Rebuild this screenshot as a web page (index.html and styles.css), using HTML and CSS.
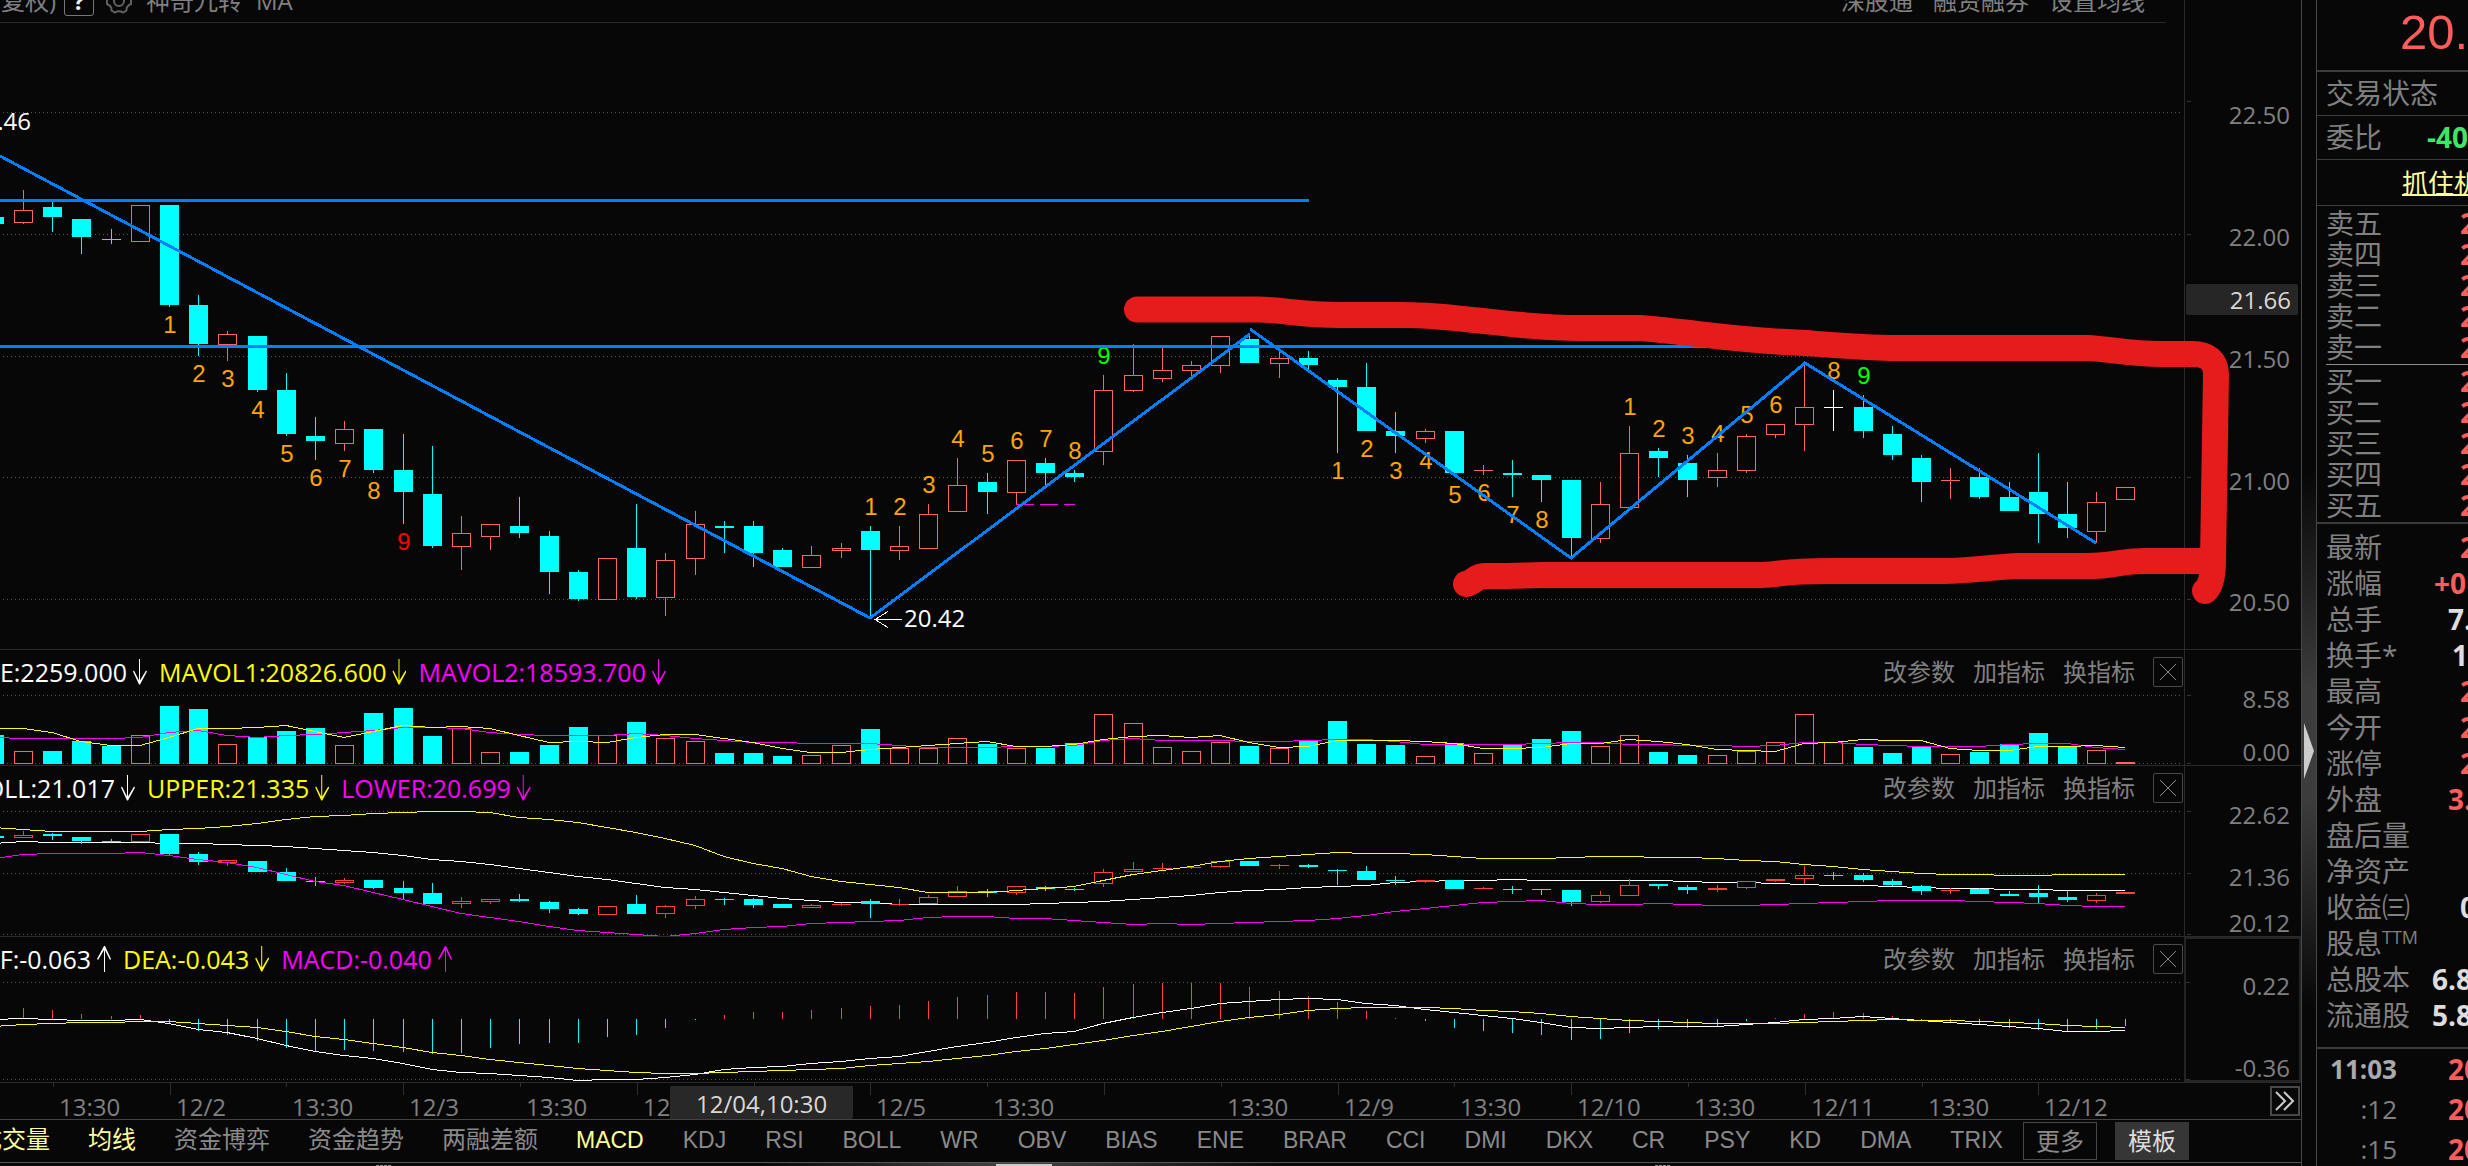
FILE: index.html
```
<!DOCTYPE html>
<html lang="zh-CN">
<head>
<meta charset="utf-8">
<title>K线图</title>
<link rel="stylesheet" href="styles.css">
</head>
<body>
<div class="terminal">
  <main class="charts">
    <section class="panel">
      <div class="plot">
        <div class="toolbar">
          <div class="toolbar-left">
            <span class="adjust">(前复权)</span>
            <button class="help" type="button">?</button>
            <button class="gear" type="button" aria-label="设置">
              <svg width="30" height="30" viewBox="0 0 30 30"><path d="M11 3.500Q15 6 19 3.500L22.500 5.500Q22 10 27 12V18Q22 20 22.500 24.500L19 26.500Q15 24 11 26.500L7.500 24.500Q8 20 3 18V12Q8 10 7.500 5.500Z"/><circle cx="15" cy="15" r="5"/></svg>
            </button>
            <span>神奇九转</span>
            <span>MA</span>
          </div>
          <div class="toolbar-right">
            <a href="#">深股通</a><a href="#">融资融券</a><a href="#">设置均线</a>
          </div>
        </div>
        <svg class="chart chart-price" id="price" viewBox="0 23 2184 626" preserveAspectRatio="xMaxYMin slice"></svg>
      </div>
      <svg class="axis" width="117" height="649">
        <g class="ticks"><path d="M2 101.500h4M2 234.500h4M2 356.500h4M2 477.500h4M2 599.500h4"/></g>
        <g class="tag"><rect x="1" y="284" width="112" height="31" rx="2"/></g>
        <g class="labels">
          <text x="105" y="124">22.50</text><text x="105" y="246">22.00</text>
          <text class="current" x="106" y="309">21.66</text>
          <text x="105" y="368">21.50</text><text x="105" y="490">21.00</text><text x="105" y="611">20.50</text>
        </g>
      </svg>
    </section>

    <section class="panel panel-split">
      <div class="plot">
        <header class="legend">
          <div class="readings">
            <span class="lead lead-volume white">VOLUME:2259.000<i class="arrow down"></i></span>
            <span class="yellow">MAVOL1:20826.600<i class="arrow down"></i></span>
            <span class="magenta">MAVOL2:18593.700<i class="arrow down"></i></span>
          </div>
          <div class="actions"><button type="button">改参数</button><button type="button">加指标</button><button type="button">换指标</button><button class="close" type="button" aria-label="关闭"></button></div>
        </header>
        <svg class="chart chart-volume" id="volume" viewBox="0 694 2184 71" preserveAspectRatio="xMaxYMin slice"></svg>
      </div>
      <svg class="axis" width="117" height="115">
        <g class="ticks"><path d="M2 45.500h4M2 113.500h4"/></g>
        <g class="labels"><text x="105" y="58">8.58</text><text x="105" y="111">0.00</text></g>
      </svg>
    </section>

    <section class="panel panel-split">
      <div class="plot">
        <header class="legend">
          <div class="readings">
            <span class="lead lead-boll white">BOLL:21.017<i class="arrow down"></i></span>
            <span class="yellow">UPPER:21.335<i class="arrow down"></i></span>
            <span class="magenta">LOWER:20.699<i class="arrow down"></i></span>
          </div>
          <div class="actions"><button type="button">改参数</button><button type="button">加指标</button><button type="button">换指标</button><button class="close" type="button" aria-label="关闭"></button></div>
        </header>
        <svg class="chart chart-boll" id="boll" viewBox="0 810 2184 126" preserveAspectRatio="xMaxYMin slice"></svg>
      </div>
      <svg class="axis" width="117" height="170">
        <g class="ticks"><path d="M2 45.500h4M2 107.500h4M2 168.500h4"/></g>
        <g class="labels"><text x="105" y="58">22.62</text><text x="105" y="120">21.36</text><text x="105" y="166">20.12</text></g>
      </svg>
    </section>

    <section class="panel panel-split">
      <div class="plot">
        <header class="legend">
          <div class="readings">
            <span class="lead lead-macd white">DIF:-0.063<i class="arrow up"></i></span>
            <span class="yellow">DEA:-0.043<i class="arrow down"></i></span>
            <span class="magenta">MACD:-0.040<i class="arrow up"></i></span>
          </div>
          <div class="actions"><button type="button">改参数</button><button type="button">加指标</button><button type="button">换指标</button><button class="close" type="button" aria-label="关闭"></button></div>
        </header>
        <svg class="chart chart-macd" id="macd" viewBox="0 981 2184 101" preserveAspectRatio="xMaxYMin slice"></svg>
      </div>
      <svg class="axis axis-active" width="117" height="145">
        <g class="ticks"><path d="M0 43.500h4M0 140.500h4"/></g>
        <g class="labels"><text x="104" y="56">0.22</text><text x="104" y="138">-0.36</text></g>
      </svg>
    </section>

    <section class="panel panel-split">
      <svg class="chart chart-time" id="time" viewBox="0 1083 2184 36" preserveAspectRatio="xMaxYMin slice"></svg>
      <div class="more-time">
        <button type="button" aria-label="展开"><svg width="26" height="26" viewBox="0 0 26 26"><path d="M4 4l9 9-9 9M12 4l9 9-9 9"/></svg></button>
      </div>
    </section>

    <nav class="tabs">
      <div class="tab-list">
        <a class="on zh" href="#">成交量</a><a class="on zh" href="#">均线</a><a class="zh" href="#">资金博弈</a><a class="zh" href="#">资金趋势</a><a class="zh" href="#">两融差额</a><a class="on" href="#">MACD</a><a href="#">KDJ</a><a href="#">RSI</a><a href="#">BOLL</a><a href="#">WR</a><a href="#">OBV</a><a href="#">BIAS</a><a href="#">ENE</a><a href="#">BRAR</a><a href="#">CCI</a><a href="#">DMI</a><a href="#">DKX</a><a href="#">CR</a><a href="#">PSY</a><a href="#">KD</a><a href="#">DMA</a><a href="#">TRIX</a>
      </div>
      <div class="tab-buttons"><button type="button">更多</button><button class="filled" type="button">模板</button></div>
    </nav>
    <div class="drawer"><b></b><i></i><b></b></div>
  </main>

  <div class="splitter"><svg width="10" height="56" viewBox="0 0 10 56"><path d="M0 0L10 28L0 56Z"/></svg></div>

  <aside class="quote">
    <div class="price">20.</div>
    <dl class="head">
      <div><dt>交易状态</dt></div>
      <div><dt>委比</dt><dd class="w40 green">-40</dd></div>
    </dl>
    <div class="promo"><a href="#">抓住机</a></div>
    <dl class="book">
      <div><dt>卖五</dt><dd class="w8 red">2</dd></div>
      <div><dt>卖四</dt><dd class="w8 red">2</dd></div>
      <div><dt>卖三</dt><dd class="w8 red">2</dd></div>
      <div><dt>卖二</dt><dd class="w8 red">2</dd></div>
      <div><dt>卖一</dt><dd class="w8 red">2</dd></div>
    </dl>
    <dl class="book bids">
      <div><dt>买一</dt><dd class="w8 red">2</dd></div>
      <div><dt>买二</dt><dd class="w8 red">2</dd></div>
      <div><dt>买三</dt><dd class="w8 red">2</dd></div>
      <div><dt>买四</dt><dd class="w8 red">2</dd></div>
      <div><dt>买五</dt><dd class="w8 red">2</dd></div>
    </dl>
    <dl class="details">
      <div><dt>最新</dt><dd class="w8 red">2</dd></div>
      <div><dt>涨幅</dt><dd class="w34 red">+0</dd></div>
      <div><dt>总手</dt><dd class="w20">7.</dd></div>
      <div><dt>换手*</dt><dd class="w16">1</dd></div>
      <div><dt>最高</dt><dd class="w8 red">2</dd></div>
      <div><dt>今开</dt><dd class="w8 red">2</dd></div>
      <div><dt>涨停</dt><dd class="w8 red">2</dd></div>
      <div><dt>外盘</dt><dd class="w20 red">3.</dd></div>
      <div><dt>盘后量</dt></div>
      <div><dt>净资产</dt></div>
      <div><dt>收益㈢</dt><dd class="w8">0</dd></div>
      <div><dt>股息<sup>TTM</sup></dt></div>
      <div><dt>总股本</dt><dd class="w36">6.8</dd></div>
      <div><dt>流通股</dt><dd class="w36">5.8</dd></div>
    </dl>
    <dl class="trades">
      <div><dt class="strong">11:03</dt><dd class="w20 red">20</dd></div>
      <div><dt>:12</dt><dd class="w20 red">20</dd></div>
      <div><dt>:15</dt><dd class="w20 red">20</dd></div>
    </dl>
  </aside>
</div>
<script src="charts.js"></script>
</body>
</html>
```
FILE: styles.css
```
* { box-sizing: border-box; }

body {
  margin: 0;
  background: #070707;
  color: #808080;
  font: 24px/30px "Open Sans", "Noto Sans CJK SC", sans-serif;
  overflow: hidden;
}

button {
  padding: 0;
  border: 0;
  background: none;
  color: inherit;
  font: inherit;
}

a { color: inherit; text-decoration: none; }
dl, dd { margin: 0; }

.terminal {
  display: grid;
  grid-template-columns: minmax(0, 1fr) 16px 151px;
  height: 100vh;
  overflow: hidden;
}

.charts { min-width: 0; }

/* Stacked chart panels: plot on the left, value axis on the right */
.panel {
  display: grid;
  grid-template-columns: minmax(0, 1fr) 117px;
}
.panel-split { border-top: 1px solid #2a2a2a; }
.plot { min-width: 0; }

.toolbar {
  display: flex;
  justify-content: space-between;
  align-items: center;
  height: 43px;
  margin: -20px 18px 0 0;
  border-bottom: 1px solid #2c2c2c;
  white-space: nowrap;
}
.toolbar-left { display: flex; align-items: center; gap: 14px; }
.adjust { width: 56px; display: flex; justify-content: flex-end; margin-right: -6px; }
.help {
  width: 30px;
  height: 30px;
  border: 1px solid #777;
  border-radius: 3px;
  color: #eee;
  font-weight: bold;
  line-height: 28px;
}
.gear { display: flex; margin-right: -2px; margin-left: -4px; }
.gear svg { fill: none; stroke: #606060; stroke-width: 2; }
.toolbar-right { display: flex; gap: 20px; margin-right: 21px; }

.chart {
  display: block;
  width: 100%;
  shape-rendering: crispEdges;
}
.chart-price { height: 626px; position: relative; overflow: visible; z-index: 1; }
.chart-volume { height: 71px; }
.chart-boll { height: 126px; }
.chart-macd { height: 101px; }
.chart-time { height: 36px; }

.axis { display: block; border-left: 1px solid #2a2a2a; }
.axis-active { border: 2px solid #242424; }
.ticks path { stroke: #333; }
.tag rect { fill: #262626; }
.labels text { fill: #808080; text-anchor: end; }
.labels .current { fill: #d8d8d8; }

/* Indicator headers */
.legend {
  display: flex;
  justify-content: space-between;
  align-items: center;
  height: 44px;
  padding-bottom: 1px;
  white-space: nowrap;
}
.readings, .readings span { display: flex; align-items: center; }
.readings { gap: 12px; font-size: 25px; }
.readings span { gap: 6px; }
.lead { justify-content: flex-end; }
.lead-volume { width: 147px; }
.lead-boll { width: 135px; }
.lead-macd { width: 111px; }
.white { color: #fff; }
.yellow { color: #ff0; }
.magenta { color: #f0f; }
.arrow {
  flex: none;
  width: 14px;
  height: 26px;
  background: currentColor;
  clip-path: polygon(6px 0, 7px 0, 7px 22px, 13px 12px, 14px 13px, 7px 26px, 6px 26px, 0 13px, 1px 12px, 6px 22px);
}
.arrow.up { transform: rotate(180deg); }

.actions { display: flex; align-items: center; gap: 18px; padding-right: 1px; }
.close {
  width: 30px;
  height: 30px;
  border: 1px solid #4a4a4a;
  border-radius: 2px;
  background:
    linear-gradient(45deg, transparent 49%, #888 49%, #888 51%, transparent 51%) center / 16px 16px no-repeat,
    linear-gradient(-45deg, transparent 49%, #888 49%, #888 51%, transparent 51%) center / 16px 16px no-repeat;
}

/* Chart drawing */
.grid { stroke: #555; stroke-dasharray: 1 3; }
.up-bar { fill: #070707; stroke: #ff6464; }
.up-wick { stroke: #ff6464; }
.bright .up-bar, .bright .up-wick { stroke: #ff4040; }
.down-bar { fill: #0ff; }
.down-wick { stroke: #0ff; }
.flat-wick { stroke: #fff; }
.bright .flat-wick { stroke: #0ff; }
.line { fill: none; }
.line.w { stroke: #fff; }
.line.y { stroke: #ff0; }
.line.m { stroke: #f0f; }
.trend { fill: none; stroke: #0080ff; stroke-width: 3; }
.support { stroke: #f0f; stroke-dasharray: 18 6; }
.count { fill: #ffa500; font-family: "Liberation Sans", sans-serif; text-anchor: middle; }
.count.red9 { fill: #f00; }
.count.green9 { fill: #0f0; }
.callout { fill: #fff; }
.callout-arrow { fill: none; stroke: #fff; }
.marker {
  fill: none;
  stroke: #e61c1c;
  stroke-width: 26;
  stroke-linecap: round;
  stroke-linejoin: round;
  shape-rendering: auto;
}
.tick { stroke: #2e2e2e; }
.time-label { fill: #808080; }
.cursor-box { fill: #282828; }
.cursor-label { fill: #d8d8d8; }

.more-time { display: flex; justify-content: flex-end; align-items: center; padding-right: 1px; }
.more-time button {
  display: flex;
  width: 30px;
  height: 30px;
  border: 2px solid #484848;
}
.more-time svg { fill: none; stroke: #ccc; stroke-width: 2; }

.tabs {
  display: flex;
  justify-content: space-between;
  align-items: center;
  height: 43px;
  padding-right: 112px;
  border-top: 1px solid #444;
  color: #8a8a8a;
  white-space: nowrap;
  overflow: hidden;
}
.tab-list {
  display: flex;
  gap: 39px;
  margin-left: -22px;
  padding-bottom: 2px;
  font-family: "Liberation Sans", "Noto Sans CJK SC", sans-serif;
  font-size: 23px;
}
.tab-list .zh { margin-right: -1px; font-size: 24px; }
.tab-list .on { color: #ffff9c; }
.tab-buttons { display: flex; gap: 18px; }
.tab-buttons button {
  width: 74px;
  height: 38px;
  border: 1px solid #484848;
}
.tab-buttons .filled { background: #363636; border-color: #363636; color: #ddd; }

.drawer {
  display: flex;
  justify-content: space-between;
  height: 4px;
  padding: 0 630px 0 376px;
  border-top: 1px solid #555;
  background: linear-gradient(90deg, transparent 33%, #444 44%, transparent 56%);
}
.drawer i { width: 56px; height: 2px; margin-top: 1px; background: #ccc; }
.drawer b { width: 16px; height: 1px; margin-top: 2px; background: repeating-linear-gradient(90deg, #999 0 3px, transparent 3px 4px); }

.splitter {
  display: flex;
  justify-content: center;
  padding-top: 723px;
  border-left: 1px solid #484848;
  border-right: 1px solid #484848;
  background: linear-gradient(transparent 470px, #3c3c3c 690px, #3c3c3c 800px, transparent 1010px);
}
.splitter path { fill: #ccc; }

/* Quote column, cut off by the window edge */
.quote { overflow: hidden; font-size: 28px; white-space: nowrap; }
.price {
  height: 72px;
  padding: 6px 0 0 83px;
  border-bottom: 2px solid #3c3c3c;
  color: #ff5c5c;
  font: 49px/52px "Liberation Sans", sans-serif;
}
.quote dl > div { display: flex; justify-content: space-between; align-items: center; padding: 0 0 2px 9px; }
.quote dt { line-height: 29px; }
.quote dd { flex: none; color: #ddd; font-weight: bold; line-height: 29px; }
.quote dd.red { color: #ff5c5c; }
.quote dd.green { color: #3ee667; }
.w8 { width: 8px; }
.w16 { width: 16px; }
.w20 { width: 20px; }
.w34 { width: 34px; }
.w36 { width: 36px; }
.w40 { width: 41px; }
.quote .head > div { height: 44px; padding-bottom: 0; border-bottom: 1px solid #3c3c3c; }
.promo {
  height: 46px;
  padding: 7px 0 0 85px;
  border-bottom: 1px solid #3c3c3c;
  color: #ffff9c;
  font-size: 26px;
  line-height: 32px;
}
.promo a { text-decoration: underline; text-decoration-thickness: 2px; }
.book { padding-top: 3px; }
.book > div { height: 31px; }
.quote .bids { margin-left: 9px; padding-top: 2px; border-top: 1px solid #8c8c8c; }
.quote .bids > div { padding-left: 0; }
.details { padding: 6px 0 13px; border-top: 2px solid #3c3c3c; border-bottom: 2px solid #3c3c3c; }
.details > div { height: 36px; }
.details sup { font-size: 18px; line-height: 18px; vertical-align: 10px; }
.trades { padding-top: 1px; }
.trades > div { height: 40px; }
.trades dt { width: 71px; text-align: right; font-size: 26px; }
.trades .strong { color: #aaa; font-weight: bold; }
```
FILE: charts.js
```
const NS = 'http://www.w3.org/2000/svg';

function add(parent, tag, attrs, text) {
  const node = document.createElementNS(NS, tag);
  for (const key in attrs) node.setAttribute(key, attrs[key]);
  if (text !== undefined) node.textContent = text;
  parent.appendChild(node);
  return node;
}

const line = (g, cls, x1, y1, x2, y2) => add(g, 'line', { class: cls, x1, y1, x2, y2 });

// Bars are 29.2 units apart; the first one is half hidden at the left edge.
const barX = i => Math.round(23 + 29.2 * i);

// [direction, high, body top, body bottom, low]
const bars = [
  ['d',217,217,224,224],['u',190,210,223,224],['d',201,207,217,232],['d',219,219,237,254],['d',229,239,240,244],
  ['u',205,205,242,242],['d',205,205,305,307],['d',295,305,344,356],['u',331,334,345,361],['d',336,336,390,392],
  ['d',373,390,434,436],['d',417,436,441,460],['u',421,429,444,451],['d',429,429,470,473],['d',434,470,492,524],
  ['d',446,494,546,548],['u',516,533,547,570],['u',524,524,537,550],['d',497,526,533,538],['d',531,536,572,594],
  ['d',570,572,599,601],['u',558,558,600,600],['d',504,548,597,599],['u',553,560,598,616],['u',511,524,559,575],
  ['d',521,526,528,553],['d',521,526,553,567],['d',548,550,567,567],['u',546,555,568,568],['u',543,548,551,558],
  ['d',526,531,550,618],['u',526,546,551,560],['u',504,514,549,549],['u',458,485,512,512],['d',473,482,492,514],
  ['u',460,460,493,504],['d',458,463,473,485],['d',470,473,477,482],['u',375,390,452,465],['u',344,375,391,392],
  ['u',347,370,379,382],['u',361,365,371,377],['u',336,336,366,373],['d',335,339,363,363],['u',352,358,364,378],
  ['d',351,358,365,370],['d',378,380,387,453],['d',363,387,431,431],['d',412,431,436,453],['u',429,431,439,443],
  ['d',431,431,473,474],['u',465,470,471,475],['d',460,473,475,497],['d',475,475,480,502],['d',480,480,538,558],
  ['u',482,504,539,543],['u',426,453,508,508],['d',448,451,458,477],['d',455,463,480,497],['u',453,470,478,487],
  ['u',434,436,471,473],['u',424,424,435,438],['u',363,407,425,451],['f',390,407,408,431],['d',395,407,431,438],
  ['d',426,434,455,460],['d',455,458,482,502],['u',468,480,481,499],['d',468,477,497,499],['d',482,497,511,511],
  ['d',453,492,514,543],['d',482,514,528,538],['u',492,502,532,543],['u',487,487,500,500]
];

function drawBars(g, map, width) {
  const half = (width - 1) / 2;
  bars.forEach(([dir, ...levels], n) => {
    const x = barX(n - 1);
    const [high, top, bottom, low] = levels.map(map);
    const kind = { u: 'up', d: 'down', f: 'flat' }[dir];
    if (dir === 'u' && bottom - top > 1) {
      if (high < top) line(g, 'up-wick', x + 0.5, high, x + 0.5, top);
      if (low > bottom) line(g, 'up-wick', x + 0.5, bottom, x + 0.5, low);
      add(g, 'rect', { class: 'up-bar', x: x - half + 0.5, y: top + 0.5, width: width - 1, height: bottom - top - 1 });
      return;
    }
    line(g, kind + '-wick', x + 0.5, high, x + 0.5, low);
    if (dir === 'd') add(g, 'rect', { class: 'down-bar', x: x - half, y: top, width, height: Math.max(1, bottom - top) });
    else line(g, kind + '-wick', x - half, top + 0.5, x + half + 1, top + 0.5);
  });
}

function drawGrid(g, levels) {
  levels.forEach(y => line(g, 'grid', 3, y + 0.5, 2180, y + 0.5));
}

// Indicator series are stored in steps of a third of a pixel, counted down from y = 640.
const step = v => Math.round(640 + v / 2.981);

function drawSeries(g, cls, values) {
  const points = values.map((v, n) => `${barX(n - 1)},${step(v) + 0.5}`).join(' ');
  add(g, 'polyline', { class: 'line ' + cls, points });
}

// Price chart
const price = document.getElementById('price');
drawGrid(price, [112, 234, 356, 477, 599]);
drawBars(price, y => y, 19);
line(price, 'support', 1016, 504.5, 1075, 504.5);

const counts = [
  [5,333,1],[6,382,2],[7,387,3],[8,418,4],[9,462,5],[10,486,6],[11,477,7],[12,499,8],[13,550,9,'red9'],
  [29,515,1],[30,515,2],[31,493,3],[32,447,4],[33,462,5],[34,449,6],[35,447,7],[36,459,8],[37,364,9,'green9'],
  [45,479,1],[46,457,2],[47,479,3],[48,469,4],[49,503,5],[50,501,6],[51,523,7],[52,528,8],
  [55,415,1],[56,437,2],[57,444,3],[58,442,4],[59,423,5],[60,413,6],[62,379,8],[63,384,9,'green9']
];
counts.forEach(([i, y, label, cls]) => add(price, 'text', { class: 'count ' + (cls || ''), x: barX(i) + 1, y }, label));

add(price, 'path', { class: 'trend', d: 'M0 200.5H1309M0 346.500H1720' });
add(price, 'path', { class: 'trend', d: 'M0 156L870 618L1250 334M1250 329L1571 558L1805 363L2096 543' });
add(price, 'path', { class: 'callout-arrow', d: 'M902 619.500H875M888 611.500L875 619.500L888 627.500' });
add(price, 'text', { class: 'callout', x: 904, y: 627 }, '20.42');
add(price, 'text', { class: 'callout', x: 31, y: 130, 'text-anchor': 'end' }, '22.46');
add(price, 'path', { class: 'marker', d: 'M1137 309.500H1258C1285 310 1300 315 1340 315H1404C1460 315 1510 328 1580 328H1640C1700 333 1740 341 1806 343C1830 345 1850 347 1890 348H2087C2110 349 2130 354 2160 354H2190Q2216 353 2216 375L2213 560Q2213 585 2205 591' });
add(price, 'path', { class: 'marker', d: 'M1466 584C1474 583 1475 576 1484 576H1507L1545 575H1762C1785 574 1780 571 1830 571H1944C1970 571 1990 567 2020 566H2085C2120 566 2115 561 2145 561H2209' });

// Volume
const volume = document.getElementById('volume');
drawGrid(volume, [695, 763]);
const volumeTops = [
  735,751,751,741,746,735,706,709,744,737,731,728,745,713,708,736,728,752,752,745,727,735,722,738,741,753,753,756,755,745,
  729,748,748,738,744,748,748,743,714,723,747,751,742,746,748,741,721,744,745,756,743,753,745,739,731,746,735,752,755,755,
  751,742,714,742,747,753,747,754,752,744,733,746,750,762
];
volumeTops.forEach((top, n) => {
  const x = barX(n - 1);
  if (bars[n][0] === 'd') add(volume, 'rect', { class: 'down-bar', x: x - 9, y: top, width: 19, height: 764 - top });
  else add(volume, 'rect', { class: 'up-bar', x: x - 8.5, y: top + 0.5, width: 18, height: 763 - top });
});
drawSeries(volume, 'm', [290,293,293,293,293,290,275,269,284,288,284,279,275,269,258,258,263,274,279,282,282,282,276,282,293,297,305,305,308,308,308,312,320,320,320,317,317,312,299,293,299,299,299,302,302,299,294,294,302,311,311,311,311,308,305,305,311,311,314,314,317,314,305,305,311,314,317,317,317,311,308,308,320,326]);
drawSeries(volume, 'y', [263,263,275,302,314,314,288,261,263,258,254,270,290,271,254,258,257,262,284,305,302,305,288,279,279,293,303,323,335,335,324,320,314,306,302,315,315,311,296,285,284,288,284,305,320,315,299,299,299,302,306,323,323,320,308,308,296,302,311,325,329,332,308,303,296,299,299,322,329,329,317,317,314,320]);

// Bollinger bands
const boll = document.getElementById('boll');
drawGrid(boll, [811, 873, 934]);
drawSeries(boll, 'w', [606,600,602,603,603,601,604,606,609,612,615,621,626,633,641,652,660,669,681,693,704,713,725,735,743,752,761,768,776,780,782,786,788,788,788,788,785,782,779,773,767,761,752,746,741,736,732,729,722,719,716,716,713,714,716,716,716,716,719,721,722,724,728,729,731,734,737,738,740,743,743,746,746,746]);
drawBars(add(boll, 'g', { class: 'bright' }), y => Math.round(834 + (y - 205) * 0.204), 19);
drawSeries(boll, 'y', [556,563,569,570,570,570,564,559,554,546,535,526,522,517,514,511,511,514,528,535,544,557,573,590,611,644,666,681,704,718,728,737,752,752,751,744,740,734,716,698,687,675,659,651,643,637,633,635,636,639,645,649,651,651,648,645,645,648,648,651,657,660,668,674,682,690,696,699,699,702,702,699,699,699]);
drawSeries(boll, 'm', [650,637,636,636,635,633,641,653,662,678,697,717,731,752,771,794,813,827,837,852,865,871,876,881,874,862,857,853,845,842,839,835,827,824,824,830,830,834,842,848,845,848,845,842,839,836,830,821,809,800,791,782,779,776,784,788,787,785,788,791,791,788,785,782,779,776,776,776,779,782,785,791,794,794]);

// MACD
const macd = document.getElementById('macd');
drawGrid(macd, [982, 1079]);
const zero = 1131;
const columns = [1097,1103,1115,1121,1118,1142,1165,1177,1195,1216,1227,1222,1225,1228,1234,1231,1216,1204,1201,1201,1183,1177,1157,1134,1118,1109,1109,1103,1097,1091,1088,1076,1064,1058,1049,1049,1052,1034,1025,1022,1022,1022,1034,1046,1061,1079,1106,1127,1136,1157,1166,1172,1177,1192,1189,1172,1160,1157,1151,1136,1127,1115,1109,1112,1121,1134,1139,1148,1157,1163,1167,1160,1151];
const columnGroup = add(macd, 'g', { class: 'bright' });
columns.forEach((v, i) => line(columnGroup, v < zero ? 'up-wick' : 'down-wick', barX(i) + 0.5, step(zero), barX(i) + 0.5, step(v)));
drawSeries(macd, 'w', [1131,1128,1129,1132,1134,1129,1143,1161,1170,1187,1208,1226,1236,1247,1262,1280,1289,1292,1296,1304,1313,1310,1310,1304,1293,1279,1274,1270,1262,1256,1247,1241,1226,1211,1199,1184,1173,1166,1142,1124,1110,1096,1083,1075,1071,1068,1071,1081,1089,1099,1110,1119,1128,1138,1153,1158,1155,1152,1152,1152,1146,1140,1131,1126,1122,1126,1133,1138,1146,1152,1158,1167,1167,1164]);
drawSeries(macd, 'y', [1152,1146,1143,1140,1140,1137,1137,1143,1149,1155,1167,1179,1190,1202,1214,1227,1238,1250,1259,1268,1277,1283,1289,1292,1292,1289,1286,1282,1280,1275,1268,1262,1256,1247,1238,1226,1217,1205,1193,1178,1166,1152,1137,1125,1116,1104,1098,1095,1095,1095,1098,1102,1107,1113,1122,1128,1134,1137,1140,1143,1143,1143,1140,1137,1134,1131,1134,1134,1137,1140,1143,1149,1152,1155]);

// Time axis: a long tick opens each day, a short one marks the afternoon session
const time = document.getElementById('time');
[[53,'13:30'],[170,'12/2',1],[286,'13:30'],[403,'12/3',1],[520,'13:30'],[637,'12/4',1],[754,''],[870,'12/5',1],[987,'13:30'],
 [1104,'',1],[1221,'13:30'],[1338,'12/9',1],[1454,'13:30'],[1571,'12/10',1],[1688,'13:30'],[1805,'12/11',1],[1922,'13:30'],[2038,'12/12',1]
].forEach(([x, label, long]) => {
  line(time, 'tick', x + 0.5, 1083, x + 0.5, long ? 1095 : 1087);
  if (label) add(time, 'text', { class: 'time-label', x: x + 6, y: 1116 }, label);
});
add(time, 'rect', { class: 'cursor-box', x: 670, y: 1086, width: 183, height: 33, rx: 2 });
add(time, 'text', { class: 'cursor-label', x: 696, y: 1113 }, '12/04,10:30');
```
